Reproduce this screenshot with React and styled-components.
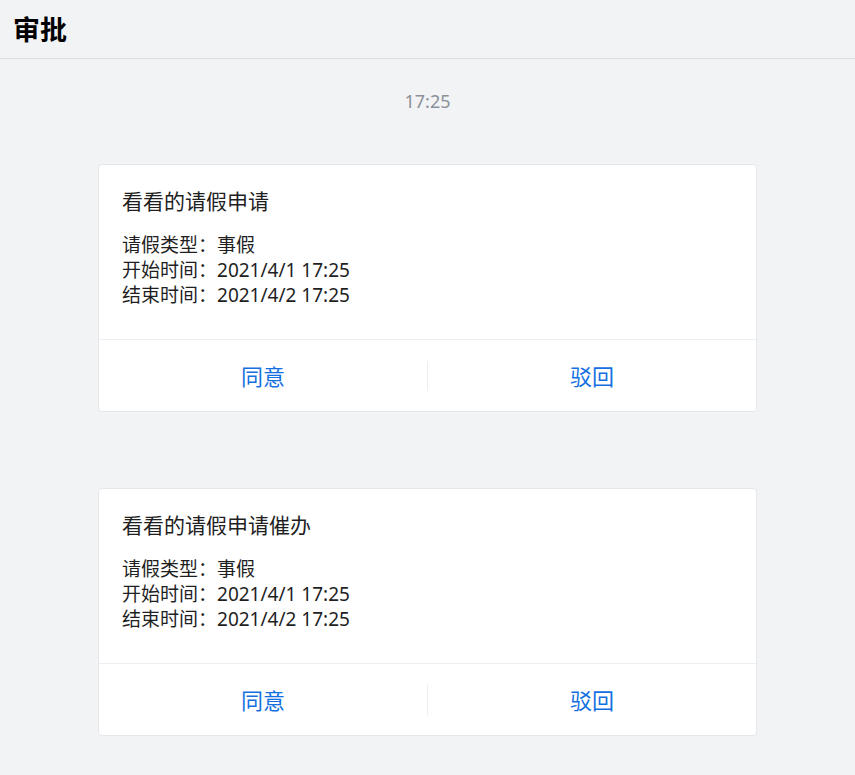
import React from 'react';
import styled, { createGlobalStyle } from 'styled-components';

const GlobalStyle = createGlobalStyle`
    html, body {
        margin: 0;
        padding: 0;
        background: #f2f3f5;
    }
    body {
        font-family: "Noto Sans", "Noto Sans CJK SC", sans-serif;
        color: #1f1f1f;
    }
`;

const Page = styled.div`
    min-height: 100vh;
    background: #f2f3f5;
`;
const Header = styled.div`
    height: 58px;
    display: flex;
    align-items: center;
    padding-left: 13px;
    border-bottom: 1px solid #dcdde0;
`;
const Title = styled.h1`
    margin: 0;
    font-size: 27px;
    font-weight: 700;
    color: #000;
    line-height: 1;
`;
const Time = styled.div`
    margin-top: 30px;
    text-align: center;
    font-size: 18px;
    line-height: 24px;
    color: #8b9099;
`;
const List = styled.div`
    display: flex;
    flex-direction: column;
    align-items: center;
    gap: 76px;
    margin-top: 51px;
`;
const Card = styled.div`
    box-sizing: border-box;
    width: 659px;
    background: #fff;
    border: 1px solid #e6e7ea;
    border-radius: 4px;
`;
const Body = styled.div`
    padding: 22px 23px 31px;
`;
const CardTitle = styled.div`
    font-size: 21px;
    line-height: 28px;
`;
const Info = styled.div`
    margin-top: 18px;
    font-size: 19px;
    line-height: 25px;
`;
const Actions = styled.div`
    display: flex;
    align-items: center;
    height: 71px;
    border-top: 1px solid #eeeff1;
`;
const Action = styled.button`
    flex: 1;
    background: none;
    border: none;
    padding: 0;
    font-family: inherit;
    font-size: 22px;
    line-height: 30px;
    color: #1470e0;
    cursor: pointer;
    border-left: ${p => (p.$divider ? '1px solid #eceef0' : 'none')};
`;

const items = [
    { title: '看看的请假申请', type: '事假', start: '2021/4/1 17:25', end: '2021/4/2 17:25' },
    { title: '看看的请假申请催办', type: '事假', start: '2021/4/1 17:25', end: '2021/4/2 17:25' },
];

const App = () => {
    return (
        <Page>
            <GlobalStyle />
            <Header>
                <Title>审批</Title>
            </Header>
            <Time>17:25</Time>
            <List>
                {items.map((it, i) => (
                    <Card key={i}>
                        <Body>
                            <CardTitle>{it.title}</CardTitle>
                            <Info>
                                <div>请假类型：{it.type}</div>
                                <div>开始时间：{it.start}</div>
                                <div>结束时间：{it.end}</div>
                            </Info>
                        </Body>
                        <Actions>
                            <Action>同意</Action>
                            <Action $divider>驳回</Action>
                        </Actions>
                    </Card>
                ))}
            </List>
        </Page>
    );
};

export default App;
